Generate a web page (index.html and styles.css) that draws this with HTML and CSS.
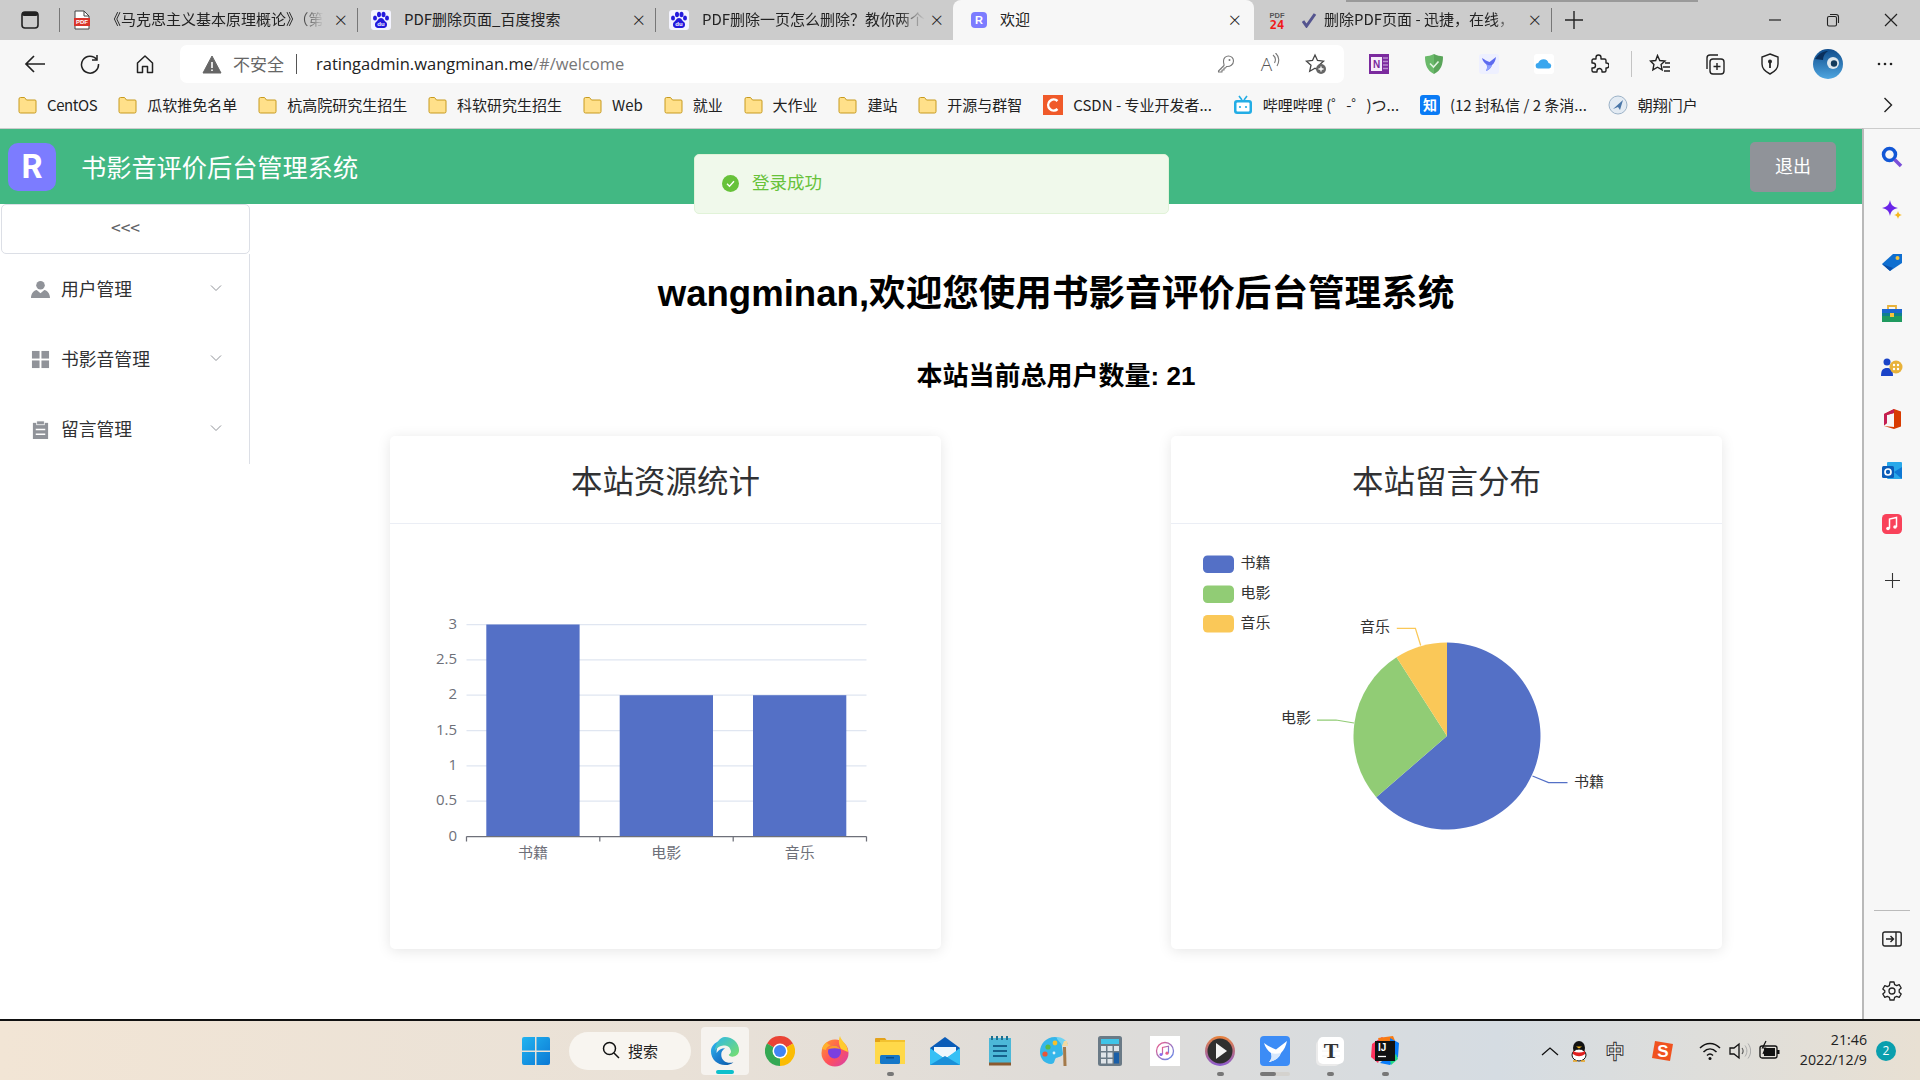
FILE: index.html
```html
<!DOCTYPE html>
<html lang="zh-CN">
<head>
    <meta charset="UTF-8">
    <title>欢迎</title>
    <link rel="stylesheet" href="styles.css">
</head>
<body>

<div class="browser">

    <!-- tab strip -->
    <div class="tabstrip">
        <div class="tab-menu">
            <svg width="20" height="18" viewBox="0 0 20 18"><rect x="2" y="1" width="16" height="16" rx="3" fill="none" stroke="#222" stroke-width="1.6"/><rect x="2" y="1" width="16" height="4" rx="2" fill="#222"/></svg>
        </div>
        <div class="tab">
            <svg class="tab-icon" width="18" height="20" viewBox="0 0 18 20"><path d="M2 1h9l5 5v13H2z" fill="#fff" stroke="#444"/><path d="M11 1v5h5" fill="none" stroke="#444"/><rect x="1" y="8" width="16" height="8" fill="#d9342b"/><text class="pdf-mark" x="9" y="14.2" text-anchor="middle">PDF</text></svg>
            <span class="tab-title tab-title-a">《马克思主义基本原理概论》（第</span>
            <span class="tab-close">×</span>
        </div>
        <div class="tab">
            <svg class="tab-icon" width="20" height="20" viewBox="0 0 20 20"><rect width="20" height="20" rx="3" fill="#f4f4ff"/><ellipse cx="4" cy="8" rx="2" ry="2.6" fill="#2319dc"/><ellipse cx="8" cy="4.5" rx="2" ry="2.8" fill="#2319dc"/><ellipse cx="12.5" cy="4.5" rx="2" ry="2.8" fill="#2319dc"/><ellipse cx="16" cy="8" rx="2" ry="2.6" fill="#2319dc"/><path d="M10 8c-3 0-3 3-5 4-2 2-1 6 2 6h6c3 0 4-4 2-6-2-1-2-4-5-4z" fill="#2319dc"/><text class="du-mark" x="10" y="16.4" text-anchor="middle">du</text></svg>
            <span class="tab-title">PDF删除页面_百度搜索</span>
            <span class="tab-close">×</span>
        </div>
        <div class="tab">
            <svg class="tab-icon" width="20" height="20" viewBox="0 0 20 20"><rect width="20" height="20" rx="3" fill="#f4f4ff"/><ellipse cx="4" cy="8" rx="2" ry="2.6" fill="#2319dc"/><ellipse cx="8" cy="4.5" rx="2" ry="2.8" fill="#2319dc"/><ellipse cx="12.5" cy="4.5" rx="2" ry="2.8" fill="#2319dc"/><ellipse cx="16" cy="8" rx="2" ry="2.6" fill="#2319dc"/><path d="M10 8c-3 0-3 3-5 4-2 2-1 6 2 6h6c3 0 4-4 2-6-2-1-2-4-5-4z" fill="#2319dc"/><text class="du-mark" x="10" y="16.4" text-anchor="middle">du</text></svg>
            <span class="tab-title tab-title-c">PDF删除一页怎么删除？教你两个</span>
            <span class="tab-close">×</span>
        </div>
        <div class="tab tab-active">
            <svg class="tab-icon" width="16" height="16" viewBox="0 0 16 16"><rect width="16" height="16" rx="4" fill="#7c7cff"/><text class="fav-r" x="8" y="12" text-anchor="middle">R</text></svg>
            <span class="tab-title">欢迎</span>
            <span class="tab-close">×</span>
        </div>
        <div class="tab tab-last">
            <svg class="tab-icon" width="18" height="20" viewBox="0 0 18 20"><text class="pdf24-a" x="9" y="7.5" text-anchor="middle">PDF</text><text class="pdf24-b" x="9" y="19" text-anchor="middle">24</text></svg>
            <svg class="tab-icon-b" width="15" height="16" viewBox="0 0 15 16"><path d="M1 9l3.500 5L13 2" fill="none" stroke="#54548f" stroke-width="3"/></svg>
            <span class="tab-title tab-title-e">删除PDF页面 - 迅捷，在线，</span>
            <span class="tab-close">×</span>
        </div>
        <div class="tab-new">
            <svg width="18" height="18" viewBox="0 0 18 18"><path d="M9 0v18M0 9h18" stroke="#222" stroke-width="1.4"/></svg>
        </div>
        <div class="win-controls">
            <svg width="14" height="14" viewBox="0 0 14 14"><path d="M1 7h12" stroke="#222" stroke-width="1.2"/></svg>
            <svg width="14" height="14" viewBox="0 0 14 14"><rect x="1.500" y="3.500" width="9" height="9.500" rx="1.500" fill="none" stroke="#222" stroke-width="1.100"/><path d="M4 1.500h6a2.500 2.500 0 0 1 2.500 2.500v6" fill="none" stroke="#222" stroke-width="1.100"/></svg>
            <svg width="14" height="14" viewBox="0 0 14 14"><path d="M1 1l12 12M13 1L1 13" stroke="#222" stroke-width="1.200"/></svg>
        </div>
        <div class="strip-shadow"></div>
    </div>

    <!-- address bar -->
    <div class="toolbar">
        <div class="tool-slot">
            <svg width="22" height="20" viewBox="0 0 22 20"><path d="M21 10H2M10 2l-8 8 8 8" fill="none" stroke="#222" stroke-width="1.700"/></svg>
        </div>
        <div class="tool-slot">
            <svg width="20" height="20" viewBox="0 0 20 20"><path d="M16.800 5.500A8.500 8.500 0 1 0 18.500 10" fill="none" stroke="#222" stroke-width="1.500"/><path d="M17 1v5h-5" fill="none" stroke="#222" stroke-width="1.500"/></svg>
        </div>
        <div class="tool-slot">
            <svg width="20" height="20" viewBox="0 0 20 20"><path d="M2.500 9L10 2l7.500 7v9.500h-5v-6h-5v6h-5z" fill="none" stroke="#222" stroke-width="1.500" stroke-linejoin="round"/></svg>
        </div>
        <div class="address">
            <svg class="warn" width="20" height="19" viewBox="0 0 20 19"><path d="M10 1l9 17H1z" fill="#666" stroke="#666" stroke-linejoin="round"/><path d="M10 7v6M10 14.500v1.500" stroke="#fff" stroke-width="1.600"/></svg>
            <span class="not-secure">不安全</span>
            <span class="addr-sep"></span>
            <span class="url">ratingadmin.wangminan.me<span class="url-path">/#/welcome</span></span>
            <div class="addr-actions">
                <div class="addr-slot"><svg width="18" height="18" viewBox="0 0 18 18"><path d="M7 10.500L1.500 16v1h3.500v-2h2v-2h1.500l1-1.500c3.500.5 7-2 7-5.500a5 5 0 0 0-10 0c0 1.500.2 2.500.5 3.500z" fill="none" stroke="#777" stroke-width="1.100" stroke-linejoin="round"/><circle cx="12.500" cy="5" r="1" fill="#777"/></svg></div>
                <div class="addr-slot"><span class="read-a">A</span><svg class="read-waves" width="8" height="14" viewBox="0 0 8 14"><path d="M1 2c2.500 2 3 5 1.500 8M3.500 0c4 3.500 4 9 1.500 13" fill="none" stroke="#777" stroke-width="1.100"/></svg></div>
                <div class="addr-slot"><svg width="22" height="22" viewBox="0 0 22 22"><path d="M10 2l2.500 5.500 6 .7-4.500 4 1.300 6-5.300-3-5.300 3 1.300-6-4.500-4 6-.7z" fill="none" stroke="#444" stroke-width="1.300"/><circle cx="16" cy="16" r="5" fill="#666"/><path d="M16 13.500v5M13.500 16h5" stroke="#fff" stroke-width="1.300"/></svg></div>
            </div>
        </div>
        <div class="ext-group">
            <div class="tool-slot"><svg width="20" height="20" viewBox="0 0 20 20"><rect width="20" height="20" fill="#7b2a9e"/><rect x="2" y="3" width="11" height="14" fill="#f6edfa"/><path d="M14 4h5M14 7.500h5M14 11h5M14 14.500h5" stroke="#b98cd0" stroke-width="1.500"/><text class="n-mark" x="7.500" y="14" text-anchor="middle">N</text></svg></div>
            <div class="tool-slot"><svg width="20" height="20" viewBox="0 0 20 20"><path d="M10 0c3 1.500 6 2 9 2.500 0 8-2 14-9 17.500z" fill="#5aa55a"/><path d="M10 0C7 1.500 4 2 1 2.500 1 10.500 3 16.500 10 20z" fill="#6ab96a"/><path d="M6 9.500l3.500 3.500 5-5.500" fill="none" stroke="#dff3df" stroke-width="1.600"/></svg></div>
            <div class="tool-slot"><svg width="20" height="20" viewBox="0 0 20 20"><rect width="20" height="20" rx="3" fill="#eef0ff"/><path d="M3 4c3 2 5 3 7.500 4L17 3c-.5 3.500-1.500 6-4 8-1 3-3 5-6 6 1-2 1.500-4 .5-6.500C5.500 9 3.500 7 3 4z" fill="#5d6bf0"/><path d="M8 10.500c2 1 3 1 5 .5-1 3-3 5-6 6 1-2 1.500-4 1-6.500z" fill="#8ea0ff"/></svg></div>
            <div class="tool-slot"><svg width="20" height="20" viewBox="0 0 20 20"><rect width="20" height="20" rx="3" fill="#fff"/><path d="M4.500 14.500a2.700 2.700 0 0 1-.3-5.400C5 6.800 7 5.300 9.700 5.300c2.500 0 4.300 1.500 4.800 3.700a2.800 2.800 0 0 1 .7 5.500z" fill="#3aa6ee"/></svg></div>
            <div class="tool-slot"><svg width="20" height="20" viewBox="0 0 20 20"><path d="M7 3.500a2.500 2.500 0 0 1 5 0V5h3.500A1.500 1.500 0 0 1 17 6.500V9h.5a2.500 2.500 0 0 1 0 5H17v2.500a1.500 1.500 0 0 1-1.500 1.500H13v-1a2.500 2.500 0 0 0-5 0v1H4.500A1.500 1.500 0 0 1 3 16.500V14h1a2.500 2.500 0 0 0 0-5H3V6.500A1.500 1.500 0 0 1 4.500 5H7z" fill="none" stroke="#222" stroke-width="1.400" stroke-linejoin="round"/></svg></div>
            <span class="tool-sep"></span>
            <div class="tool-slot"><svg width="22" height="20" viewBox="0 0 22 20"><path d="M8.500 1.500l2.300 5 5.200.6-3.900 3.500 1 5.200-4.600-2.600-4.600 2.600 1-5.200L1.500 7.100l5.200-.6z" fill="none" stroke="#222" stroke-width="1.400"/><path d="M14 13h7M16 9h5M15 17h6" stroke="#222" stroke-width="1.400"/></svg></div>
            <div class="tool-slot"><svg width="22" height="22" viewBox="0 0 22 22"><rect x="6" y="6" width="14" height="15" rx="3" fill="none" stroke="#222" stroke-width="1.400"/><path d="M3 16V5a3 3 0 0 1 3-3h8" fill="none" stroke="#222" stroke-width="1.400"/><path d="M13 10v7M9.500 13.500h7" stroke="#222" stroke-width="1.400"/></svg></div>
            <div class="tool-slot"><svg width="20" height="22" viewBox="0 0 20 22"><path d="M10 1l8 3v7c0 5-4 8-8 10-4-2-8-5-8-10V4z" fill="none" stroke="#222" stroke-width="1.400"/><circle cx="10" cy="8.500" r="2" fill="#222"/><path d="M10 10v5" stroke="#222" stroke-width="1.800"/></svg></div>
            <div class="tool-slot tool-avatar"><svg width="30" height="30" viewBox="0 0 30 30"><defs><linearGradient id="av" x1="0" y1="0" x2="0" y2="1"><stop offset="0" stop-color="#0f4c8c"/><stop offset="1" stop-color="#4fa6e0"/></linearGradient></defs><circle cx="15" cy="15" r="15" fill="url(#av)"/><circle cx="20" cy="14" r="6" fill="#dfe8ee"/><circle cx="21" cy="14.500" r="3.200" fill="#113a5c"/><path d="M2 10c4-6 9-8 13-8-3 2-5 5-5 9z" fill="#0a2f5c"/></svg></div>
            <div class="tool-slot tool-more"><svg width="16" height="4" viewBox="0 0 16 4"><circle cx="2" cy="2" r="1.300" fill="#222"/><circle cx="8" cy="2" r="1.300" fill="#222"/><circle cx="14" cy="2" r="1.300" fill="#222"/></svg></div>
        </div>
    </div>

    <!-- bookmarks -->
    <div class="bookmarks">
        <a class="bm bm-tight"><svg class="folder" viewBox="0 0 19 18"><path d="M1 3a1.500 1.500 0 0 1 1.500-1.500h4L8.500 4H17a1 1 0 0 1 1 1v10.500a1.500 1.500 0 0 1-1.500 1.500h-14A1.500 1.500 0 0 1 1 15.500z" fill="#ffe08a" stroke="#c79a1e"/></svg>CentOS</a>
        <a class="bm"><svg class="folder" viewBox="0 0 19 18"><path d="M1 3a1.500 1.500 0 0 1 1.500-1.500h4L8.500 4H17a1 1 0 0 1 1 1v10.500a1.500 1.500 0 0 1-1.500 1.500h-14A1.500 1.500 0 0 1 1 15.500z" fill="#ffe08a" stroke="#c79a1e"/></svg>瓜软推免名单</a>
        <a class="bm"><svg class="folder" viewBox="0 0 19 18"><path d="M1 3a1.500 1.500 0 0 1 1.500-1.500h4L8.500 4H17a1 1 0 0 1 1 1v10.500a1.500 1.500 0 0 1-1.500 1.500h-14A1.500 1.500 0 0 1 1 15.500z" fill="#ffe08a" stroke="#c79a1e"/></svg>杭高院研究生招生</a>
        <a class="bm"><svg class="folder" viewBox="0 0 19 18"><path d="M1 3a1.500 1.500 0 0 1 1.500-1.500h4L8.500 4H17a1 1 0 0 1 1 1v10.500a1.500 1.500 0 0 1-1.500 1.500h-14A1.500 1.500 0 0 1 1 15.500z" fill="#ffe08a" stroke="#c79a1e"/></svg>科软研究生招生</a>
        <a class="bm"><svg class="folder" viewBox="0 0 19 18"><path d="M1 3a1.500 1.500 0 0 1 1.500-1.500h4L8.500 4H17a1 1 0 0 1 1 1v10.500a1.500 1.500 0 0 1-1.500 1.500h-14A1.500 1.500 0 0 1 1 15.500z" fill="#ffe08a" stroke="#c79a1e"/></svg>Web</a>
        <a class="bm"><svg class="folder" viewBox="0 0 19 18"><path d="M1 3a1.500 1.500 0 0 1 1.500-1.500h4L8.500 4H17a1 1 0 0 1 1 1v10.500a1.500 1.500 0 0 1-1.500 1.500h-14A1.500 1.500 0 0 1 1 15.500z" fill="#ffe08a" stroke="#c79a1e"/></svg>就业</a>
        <a class="bm"><svg class="folder" viewBox="0 0 19 18"><path d="M1 3a1.500 1.500 0 0 1 1.500-1.500h4L8.500 4H17a1 1 0 0 1 1 1v10.500a1.500 1.500 0 0 1-1.500 1.500h-14A1.500 1.500 0 0 1 1 15.500z" fill="#ffe08a" stroke="#c79a1e"/></svg>大作业</a>
        <a class="bm"><svg class="folder" viewBox="0 0 19 18"><path d="M1 3a1.500 1.500 0 0 1 1.500-1.500h4L8.500 4H17a1 1 0 0 1 1 1v10.500a1.500 1.500 0 0 1-1.500 1.500h-14A1.500 1.500 0 0 1 1 15.500z" fill="#ffe08a" stroke="#c79a1e"/></svg>建站</a>
        <a class="bm"><svg class="folder" viewBox="0 0 19 18"><path d="M1 3a1.500 1.500 0 0 1 1.500-1.500h4L8.500 4H17a1 1 0 0 1 1 1v10.500a1.500 1.500 0 0 1-1.500 1.500h-14A1.500 1.500 0 0 1 1 15.500z" fill="#ffe08a" stroke="#c79a1e"/></svg>开源与群智</a>
        <a class="bm"><svg class="bm-icon" viewBox="0 0 20 20"><rect width="20" height="20" fill="#f05a2a"/><path d="M14.500 6a5.500 5.500 0 1 0 0 8" fill="none" stroke="#fff" stroke-width="2.500"/></svg>CSDN - 专业开发者...</a>
        <a class="bm"><svg class="bm-icon" viewBox="0 0 20 20"><path d="M6 1l3 4M14 1l-3 4" stroke="#23ade5" stroke-width="1.600"/><rect x="1" y="5" width="18" height="14" rx="3" fill="#23ade5"/><rect x="3.500" y="7.500" width="13" height="9" rx="1" fill="#fff"/><circle cx="7" cy="12" r="1.100" fill="#23ade5"/><circle cx="13" cy="12" r="1.100" fill="#23ade5"/></svg>哔哩哔哩 (゜-゜)つ...</a>
        <a class="bm"><svg class="bm-icon" viewBox="0 0 20 20"><rect width="20" height="20" rx="3" fill="#0a7bf5"/><text class="zhi-mark" x="10" y="15" text-anchor="middle">知</text></svg>(12 封私信 / 2 条消...</a>
        <a class="bm"><svg class="bm-icon" viewBox="0 0 20 20"><circle cx="10" cy="10" r="9" fill="#e3ebf3" stroke="#9db3c8"/><path d="M5 14L15 5l-3 10-2-3z" fill="#4b77a8"/></svg>朝翔门户</a>
        <svg class="bm-more" width="10" height="16" viewBox="0 0 10 16"><path d="M1.500 1l7 7-7 7" fill="none" stroke="#222" stroke-width="1.400"/></svg>
    </div>

    <div class="viewport">
        <div class="page">
            <header class="app-header">
                <div class="logo">R</div>
                <div class="app-title">书影音评价后台管理系统</div>
                <button class="logout">退出</button>
            </header>

            <div class="app-body">
                <aside class="sidebar">
                    <div class="collapse-btn">&lt;&lt;&lt;</div>
                    <ul class="menu">
                        <li class="menu-item">
                            <svg class="menu-icon" viewBox="0 0 20 20"><circle cx="10" cy="5.500" r="4.500" fill="#909399"/><path d="M0 19c0-5 3-8 6-8.500L10 14l4-3.500c3 .5 6 3.500 6 8.500z" fill="#909399"/></svg>
                            <span>用户管理</span>
                            <svg class="menu-arrow" viewBox="0 0 12 8"><path d="M1 1.500l5 5 5-5" fill="none" stroke="#909399" stroke-width="1"/></svg>
                        </li>
                        <li class="menu-item">
                            <svg class="menu-icon" viewBox="0 0 20 20"><rect x="1" y="1" width="8" height="8" fill="#909399"/><rect x="11" y="1" width="8" height="8" fill="#909399"/><rect x="1" y="11" width="8" height="8" fill="#909399"/><rect x="11" y="11" width="8" height="8" fill="#909399"/></svg>
                            <span>书影音管理</span>
                            <svg class="menu-arrow" viewBox="0 0 12 8"><path d="M1 1.500l5 5 5-5" fill="none" stroke="#909399" stroke-width="1"/></svg>
                        </li>
                        <li class="menu-item">
                            <svg class="menu-icon" viewBox="0 0 20 20"><path d="M2 3h16v17H2z" fill="#909399"/><rect x="6" y="1" width="8" height="4" fill="#909399" stroke="#fff" stroke-width=".8"/><path d="M5 10h10M5 15h10" stroke="#fff" stroke-width="1.600"/></svg>
                            <span>留言管理</span>
                            <svg class="menu-arrow" viewBox="0 0 12 8"><path d="M1 1.500l5 5 5-5" fill="none" stroke="#909399" stroke-width="1"/></svg>
                        </li>
                    </ul>
                </aside>

                <main class="main">
                    <h1 class="welcome">wangminan,欢迎您使用书影音评价后台管理系统</h1>
                    <h2 class="user-count">本站当前总用户数量: 21</h2>

                    <div class="cards">
                        <section class="card">
                            <div class="card-header">本站资源统计</div>
                            <svg class="chart" viewBox="390 524 551 425">
                                <g class="grid">
                                    <path d="M466.500 624.500H866.500M466.500 659.800H866.500M466.500 695.200H866.500M466.500 730.500H866.500M466.500 765.800H866.500M466.500 801.200H866.500"/>
                                </g>
                                <rect class="bar" x="486.300" y="624.500" width="93.300" height="212"/>
                                <rect class="bar" x="619.700" y="695.200" width="93.300" height="141.300"/>
                                <rect class="bar" x="753" y="695.200" width="93.300" height="141.300"/>
                                <path class="axis" d="M466.500 836.500H866.500M466.500 836.500v5M599.800 836.500v5M733.200 836.500v5M866.500 836.500v5"/>
                                <g class="tick-y">
                                    <text x="457" y="628.500">3</text>
                                    <text x="457" y="663.500">2.5</text>
                                    <text x="457" y="698.500">2</text>
                                    <text x="457" y="734.500">1.5</text>
                                    <text x="457" y="769.500">1</text>
                                    <text x="457" y="804.500">0.5</text>
                                    <text x="457" y="840.500">0</text>
                                </g>
                                <g class="tick-x">
                                    <text x="533" y="858">书籍</text>
                                    <text x="666.300" y="858">电影</text>
                                    <text x="799.700" y="858">音乐</text>
                                </g>
                            </svg>
                        </section>

                        <section class="card">
                            <div class="card-header">本站留言分布</div>
                            <svg class="chart" viewBox="1171 524 551 425">
                                <rect class="slice-a" x="1203" y="555.500" width="31" height="17.500" rx="4.500"/>
                                <rect class="slice-b" x="1203" y="585.500" width="31" height="17.500" rx="4.500"/>
                                <rect class="slice-c" x="1203" y="615" width="31" height="17.500" rx="4.500"/>
                                <g class="legend">
                                    <text x="1240.500" y="568">书籍</text>
                                    <text x="1240.500" y="598">电影</text>
                                    <text x="1240.500" y="628">音乐</text>
                                </g>
                                <path class="slice-a" d="M1447 736V642.500A93.500 93.500 0 1 1 1376.300 797.200Z"/>
                                <path class="slice-b" d="M1447 736L1376.300 797.200A93.500 93.500 0 0 1 1396.500 657.300Z"/>
                                <path class="slice-c" d="M1447 736L1396.500 657.300A93.500 93.500 0 0 1 1447 642.500Z"/>
                                <path class="leader-a" d="M1532.500 776L1548.600 782.500H1567.500"/>
                                <path class="leader-b" d="M1354 723L1336 720H1317"/>
                                <path class="leader-c" d="M1420.700 645.500L1415.400 628.300H1396.800"/>
                                <text class="pie-label" x="1574" y="786.500">书籍</text>
                                <text class="pie-label end" x="1311" y="723">电影</text>
                                <text class="pie-label end" x="1390" y="631.500">音乐</text>
                            </svg>
                        </section>
                    </div>
                </main>
            </div>

            <div class="toast">
                <svg width="17" height="17" viewBox="0 0 17 17"><circle cx="8.500" cy="8.500" r="8.500" fill="#67c23a"/><path d="M5 8.800l2.500 2.500L12 6.300" fill="none" stroke="#fff" stroke-width="1.400"/></svg>
                <span class="toast-text">登录成功</span>
            </div>
        </div>

        <!-- edge sidebar -->
        <div class="edge-bar">
            <svg class="edge-icon" viewBox="0 0 22 22"><circle cx="8.500" cy="8.500" r="6" fill="none" stroke="#1257d6" stroke-width="3.500"/><path d="M13.500 13.500L20 20" stroke="#7a4fd8" stroke-width="3.500"/></svg>
            <svg class="edge-icon" viewBox="0 -2 22 22"><path d="M9 0c1 5 3 7 8 8-5 1-7 3-8 8-1-5-3-7-8-8 5-1 7-3 8-8z" fill="#6a25e8"/><path d="M17 11c.5 2.500 1.500 3.500 4 4-2.500.5-3.500 1.500-4 4-.5-2.500-1.500-3.500-4-4 2.500-.5 3.500-1.500 4-4z" fill="#f6b81f"/></svg>
            <svg class="edge-icon" viewBox="0 0 22 22"><path d="M1 13L12 3h9v9L9 20z" fill="#0f6fd0"/><path d="M1 13l8 7 3-3z" fill="#0a4fa8"/><circle cx="16.500" cy="7" r="2" fill="#f4c33c"/></svg>
            <svg class="edge-icon" viewBox="0 0 22 22"><rect x="1" y="6" width="20" height="13" rx="1" fill="#0f7f8f"/><rect x="1" y="13" width="20" height="6" fill="#1f9a5f"/><rect x="1" y="6" width="20" height="4" fill="#1c66d0"/><path d="M7 6V3h8v3" fill="none" stroke="#e8b23a" stroke-width="1.800"/><rect x="9" y="10" width="4" height="4" fill="#f4c33c"/></svg>
            <svg class="edge-icon" viewBox="0 0 22 22"><circle cx="6" cy="6" r="3.500" fill="#1a44c8"/><path d="M0 20c0-6 2-8 6-8s6 2 6 8z" fill="#1a44c8"/><circle cx="15" cy="11" r="6.500" fill="#e8b23a"/><circle cx="13" cy="9" r="1.200" fill="#fff"/><circle cx="17" cy="9" r="1.200" fill="#fff"/><circle cx="13" cy="13" r="1.200" fill="#fff"/><circle cx="17" cy="13" r="1.200" fill="#fff"/></svg>
            <svg class="edge-icon" viewBox="0 0 22 22"><path d="M13 1l7 2.500v15L13 21l-10-3 10 1V5L6 7v8l-3 2.500V6z" fill="#d83b01"/><path d="M3 6l10-5v4L6 7v8l-3 2.500z" fill="#c41e52"/></svg>
            <svg class="edge-icon" viewBox="0 0 22 22"><rect x="6" y="2" width="15" height="17" rx="1" fill="#28a8ea"/><rect x="1" y="6" width="12" height="12" rx="1.500" fill="#0a5cb8"/><circle cx="7" cy="12" r="3" fill="none" stroke="#fff" stroke-width="1.700"/><path d="M13 12l8-5v12z" fill="#0f78d4"/></svg>
            <svg class="edge-icon" viewBox="0 0 22 22"><rect x="1" y="1" width="20" height="20" rx="4.500" fill="#f9425a"/><path d="M8.500 15.500V6l7-1.500V14" fill="none" stroke="#fff" stroke-width="1.500"/><circle cx="7" cy="15.500" r="1.800" fill="#fff"/><circle cx="14" cy="14" r="1.800" fill="#fff"/></svg>
            <svg class="edge-add" width="15" height="15" viewBox="0 0 15 15"><path d="M7.500 0v15M0 7.500h15" stroke="#333" stroke-width="1.100"/></svg>
            <span class="edge-sep"></span>
            <svg class="edge-pane" width="20" height="16" viewBox="0 0 20 16"><rect x=".8" y="1" width="18.400" height="14" rx="2" fill="none" stroke="#222" stroke-width="1.400"/><path d="M14 1v14" stroke="#222" stroke-width="1.400"/><path d="M4 8h7M8.500 5l3 3-3 3" fill="none" stroke="#222" stroke-width="1.400"/></svg>
            <svg class="edge-gear" width="20" height="20" viewBox="0 0 20 20"><path d="M8 1h4l.6 2.700 2.100 1 2.500-1.100 2 3.400-2 1.800v2.400l2 1.800-2 3.400-2.500-1.100-2.100 1L12 19H8l-.6-2.700-2.100-1-2.500 1.100-2-3.400 2-1.800V9.800l-2-1.800 2-3.400 2.500 1.100 2.100-1z" fill="none" stroke="#222" stroke-width="1.300" stroke-linejoin="round"/><circle cx="10" cy="10" r="3" fill="none" stroke="#222" stroke-width="1.300"/></svg>
        </div>
    </div>

    <!-- windows taskbar -->
    <footer class="taskbar">
        <div class="task-slot">
            <svg width="30" height="30" viewBox="0 0 30 30"><defs><linearGradient id="win" x1="0" y1="0" x2="1" y2="1"><stop offset="0" stop-color="#22b4f0"/><stop offset="1" stop-color="#0b78d4"/></linearGradient></defs><path d="M1 3a2 2 0 0 1 2-2h11v13.500H1zM15.500 1H27a2 2 0 0 1 2 2v11.500H15.500zM1 16h13v13H3a2 2 0 0 1-2-2zM15.500 16H29v11a2 2 0 0 1-2 2H15.500z" fill="url(#win)"/></svg>
        </div>
        <div class="search-box">
            <svg width="18" height="18" viewBox="0 0 18 18"><circle cx="7.500" cy="7.500" r="6" fill="none" stroke="#111" stroke-width="1.500"/><path d="M12 12l5 5" stroke="#111" stroke-width="1.500"/></svg>
            <span>搜索</span>
        </div>
        <div class="task-slot task-edge is-active">
            <svg width="30" height="30" viewBox="0 0 32 32"><defs><linearGradient id="edge1" x1="0" y1="0" x2="1" y2="1"><stop offset="0" stop-color="#35c1f1"/><stop offset=".5" stop-color="#1b7fd0"/><stop offset="1" stop-color="#0c59a4"/></linearGradient><linearGradient id="edge2" x1="0" y1="0" x2="1" y2="1"><stop offset="0" stop-color="#2fb8e8"/><stop offset="1" stop-color="#79e06a"/></linearGradient></defs><path d="M15 4C7 5 1 10 1 16c0 9 7 15 15 15 4 0 7-1 9-3-6 2-13-1-13-8 0-3 1-5 4-7-4 0-7 2-9 5 0-7 4-12 8-14z" fill="url(#edge1)"/><path d="M16 1c8 0 15 6 15 14 0 5-4 7-7 7-2 0-4-1-4-2 2-1 3-3 2-5-1-4-4-5-7-5-2 0-7 1-10 6C6 8 10 1 16 1z" fill="url(#edge2)"/></svg>
        </div>
        <div class="task-slot">
            <svg width="30" height="30" viewBox="1 1 30 30"><path d="M16 16L3 8.500A15 15 0 0 1 29 8.500Z" fill="#ea4335"/><path d="M16 16L29 8.500A15 15 0 0 1 16 31Z" fill="#fbbc04"/><path d="M16 16L16 31A15 15 0 0 1 3 8.500Z" fill="#34a853"/><circle cx="16" cy="16" r="7.500" fill="#fff"/><circle cx="16" cy="16" r="6" fill="#4285f4"/></svg>
        </div>
        <div class="task-slot">
            <svg width="30" height="32" viewBox="0 0 30 32"><defs><linearGradient id="fox" x1="0" y1="0" x2="1" y2="1"><stop offset="0" stop-color="#ff9b2b"/><stop offset=".55" stop-color="#ff4f5e"/><stop offset="1" stop-color="#d13fb0"/></linearGradient></defs><circle cx="15" cy="18" r="13.500" fill="url(#fox)"/><path d="M20 1c1 5 8 8 8 16l-7-3c-2-4-3-8-1-13z" fill="#ffcb2f"/><path d="M2 14c1-4 3-6 5-7 0 2 2 3 4 3-3 1-5 3-5 5z" fill="#ffb02e"/><circle cx="14.500" cy="17" r="6.500" fill="#7a3fe0"/><path d="M8 14c4-5 10-4 12 0-3-1-7-1-12 0z" fill="#ff9b2b"/></svg>
        </div>
        <div class="task-slot has-dot">
            <svg width="30" height="28" viewBox="0 0 30 28"><path d="M0 2a1 1 0 0 1 1-1h9l3 4H0z" fill="#e3a21a"/><path d="M0 5h30v22H0z" fill="#ffd94a"/><path d="M5 3h25v2H5z" fill="#f2c230"/><rect x="5" y="18" width="20" height="9" rx="1.500" fill="#1577c8"/><rect x="11" y="20" width="8" height="1.500" fill="#0c4f8c"/></svg>
        </div>
        <div class="task-slot">
            <svg width="30" height="30" viewBox="0 0 30 30"><path d="M0 12L15 1l15 11v17H0z" fill="#0a5cb8"/><path d="M4 11h22v5L15 23 4 16z" fill="#eef6fc"/><path d="M0 12l15 11 15-11v17H0z" fill="#35c0f5"/><path d="M0 29l15-9 15 9z" fill="#1a8fd8"/></svg>
        </div>
        <div class="task-slot">
            <svg width="22" height="30" viewBox="0 0 22 30"><rect y="2" width="22" height="25" fill="#4cb8d8"/><path d="M3 0v4M8 0v4M13 0v4M18 0v4" stroke="#1e6f8f" stroke-width="2"/><path d="M4 10h14M4 15h14M4 20h14" stroke="#16618c" stroke-width="2"/><rect y="26.500" width="22" height="3" fill="#8a5a30"/></svg>
        </div>
        <div class="task-slot">
            <svg width="30" height="30" viewBox="0 0 30 30"><path d="M15 1C6 1 0 8 0 16c0 7 5 12 11 12 4 0 3-4 5-6 2-1 6-1 7-4L21 3c-2-1-4-2-6-2z" fill="#35b6ea"/><path d="M17 1c5 0 9 3 11 7l-5 2-6-7z" fill="#6fd3f2"/><circle cx="8" cy="11" r="2.600" fill="#58b947"/><circle cx="15" cy="7" r="2.400" fill="#f6c02c"/><circle cx="5" cy="18" r="2.600" fill="#e8563a"/><circle cx="14" cy="17" r="1.400" fill="#dff3fb"/><path d="M23 11h3l.5 19h-3z" fill="#a47a4a"/><path d="M22 10l2-5 3 0 1 5z" fill="#f2d9a0"/></svg>
        </div>
        <div class="task-slot">
            <svg width="24" height="30" viewBox="0 0 24 30"><rect width="24" height="30" rx="2.500" fill="#6a7a86"/><rect x="3" y="3" width="18" height="5" fill="#3fc4e8"/><rect x="3" y="10" width="5" height="5" fill="#dfe4e8"/><rect x="9.500" y="10" width="5" height="5" fill="#dfe4e8"/><rect x="16" y="10" width="5" height="5" fill="#dfe4e8"/><rect x="3" y="16.500" width="5" height="5" fill="#dfe4e8"/><rect x="9.500" y="16.500" width="5" height="5" fill="#dfe4e8"/><rect x="16" y="16.500" width="5" height="11" fill="#1a5fa8"/><rect x="3" y="23" width="5" height="4.500" fill="#dfe4e8"/><rect x="9.500" y="23" width="5" height="4.500" fill="#dfe4e8"/></svg>
        </div>
        <div class="task-slot">
            <svg width="30" height="30" viewBox="0 0 30 30"><defs><linearGradient id="tune" x1="0" y1="0" x2="1" y2="1"><stop offset="0" stop-color="#f05a88"/><stop offset="1" stop-color="#5a8cf0"/></linearGradient></defs><rect width="30" height="30" fill="#fff"/><circle cx="15" cy="15" r="8.500" fill="none" stroke="url(#tune)" stroke-width="1.300"/><path d="M12.500 18.500V11.500l6-1.300v7" fill="none" stroke="url(#tune)" stroke-width="1.200"/><circle cx="11" cy="18.500" r="1.600" fill="#8a6af0"/><circle cx="17" cy="17.200" r="1.600" fill="#e8608c"/></svg>
        </div>
        <div class="task-slot has-dot">
            <svg width="30" height="30" viewBox="0 0 30 30"><defs><linearGradient id="ply" x1="0" y1="0" x2="0" y2="1"><stop offset="0" stop-color="#e8823a"/><stop offset="1" stop-color="#8a5ad0"/></linearGradient></defs><circle cx="15" cy="15" r="15" fill="url(#ply)"/><circle cx="15" cy="15" r="12.500" fill="#2f2f2f"/><path d="M11 7l11 8-11 8z" fill="#f4f4f4"/></svg>
        </div>
        <div class="task-slot has-dot is-wide">
            <svg width="30" height="30" viewBox="0 0 30 30"><rect width="30" height="30" rx="4" fill="#3c8cf6"/><path d="M4 7c4 3 8 5 12 6.500L27 5c-1 5-3 9-6 12-2 5-6 8-12 9 3-3 3-6 2-9C8 15 5 11 4 7z" fill="#fff"/><path d="M11 17c3 1 6 1 10 0-2 5-6 8-12 9 3-3 3-6 2-9z" fill="#d8e8fc"/></svg>
        </div>
        <div class="task-slot has-dot">
            <svg width="28" height="30" viewBox="0 0 28 30"><rect x="0" y="4" width="24" height="26" rx="5" fill="#ebebeb"/><rect x="2" y="1" width="26" height="27" rx="5" fill="#fff"/><path d="M6 10h18M6 15h18M6 20h18" stroke="#f2f2f2"/><text class="typora-t" x="15" y="22" text-anchor="middle">T</text></svg>
        </div>
        <div class="task-slot has-dot">
            <svg width="30" height="30" viewBox="0 0 30 30"><path d="M2 8L12 1l5 4-9 22-7-6z" fill="#fe315d"/><path d="M8 2l15-2 3 7-14 3z" fill="#f97a12"/><path d="M20 2l9 5-1 14-8 8-10-2 10-10z" fill="#087cfa"/><path d="M20 24l6-6 2 5-7 6z" fill="#21d789"/><rect x="5" y="5" width="20" height="20" fill="#111"/><text class="ij-mark" x="8" y="15">IJ</text><path d="M8 20.500h8" stroke="#fff" stroke-width="1.300"/></svg>
        </div>

        <div class="tray">
            <svg class="tray-icon" viewBox="0 0 22 22"><path d="M3 15l8-7 8 7" fill="none" stroke="#111" stroke-width="1.300"/></svg>
            <svg class="tray-icon gap-7" viewBox="0 0 22 22"><ellipse cx="11" cy="8" rx="6" ry="7" fill="#111"/><ellipse cx="11" cy="15" rx="7" ry="6" fill="#fff" stroke="#111"/><path d="M5 11c4 2 8 2 12 0v3c-4 3-8 3-12 0z" fill="#e02020"/><path d="M8 6.500h6l-3 2z" fill="#f5b81f"/><path d="M5 21h4M13 21h4" stroke="#e8a11a" stroke-width="1.500"/></svg>
            <span class="ime gap-14">中</span>
            <svg class="tray-icon gap-26" viewBox="0 0 22 22"><path d="M3 1l18 3-3 17L0 18z" fill="#f0521f"/><text class="sogou-s" x="11" y="16.500" text-anchor="middle">S</text></svg>
            <svg class="tray-icon gap-25" viewBox="0 0 22 22"><path d="M1 8c6-6 14-6 20 0M4.500 12c4-4 9-4 13 0M8 15.500c2-2 4-2 6 0" fill="none" stroke="#111" stroke-width="1.500"/><circle cx="11" cy="18.500" r="1.500" fill="#111"/></svg>
            <svg class="tray-icon gap-8" viewBox="0 0 22 22"><path d="M1 8v6h4l5 4V4L5 8z" fill="none" stroke="#111" stroke-width="1.300"/><path d="M13 8c1.500 2 1.500 4 0 6" fill="none" stroke="#555" stroke-width="1.100"/><path d="M16 5.500c2.500 3.500 2.500 7.500 0 11M19 3.500c3.500 4.500 3.500 10.500 0 15" fill="none" stroke="#aaa" stroke-width="1"/></svg>
            <svg class="tray-icon gap-8" viewBox="0 0 22 22"><rect x="1" y="6" width="17" height="12" rx="2" fill="none" stroke="#111" stroke-width="1.300"/><rect x="5" y="8" width="11" height="8" fill="#111"/><rect x="18" y="10" width="2.500" height="4" fill="#111"/><path d="M7 1L3.500 8h3L4 14" fill="none" stroke="#111" stroke-width="1.200"/></svg>
            <div class="clock gap-16"><span>21:46</span><span>2022/12/9</span></div>
            <span class="notify gap-9">2</span>
        </div>
    </footer>
</div>

</body>
</html>
```
FILE: styles.css
```css
* {
    box-sizing: border-box;
}

body {
    margin: 0;
    width: 1920px;
    height: 1080px;
    overflow: hidden;
    font-family: "Noto Sans CJK SC", sans-serif;
    color: #222;
}

.browser {
    position: relative;
    display: flex;
    flex-direction: column;
    height: 1080px;
}

/* tab strip */
.tabstrip {
    position: relative;
    display: flex;
    height: 40px;
    flex-shrink: 0;
    background-color: #cccccc;
}

.tab-menu {
    display: flex;
    align-items: center;
    justify-content: center;
    width: 60px;
    height: 24px;
    margin-top: 8px;
    border-right: 1px solid #777;
}

.tab {
    display: flex;
    align-items: center;
    flex-shrink: 0;
    width: 298px;
    height: 40px;
    padding-left: 13px;
    font-size: 15px;
    position: relative;
    white-space: nowrap;
}

.tab::after {
    content: "";
    position: absolute;
    right: 0;
    top: 8px;
    width: 1px;
    height: 24px;
    background-color: #777;
}

.tab-icon {
    flex-shrink: 0;
    overflow: visible;
}

.tab-icon-b {
    flex-shrink: 0;
    margin-left: 16px;
}

.tab-title {
    margin-left: 13px;
    padding-bottom: 4px;
}

.tab-title-a {
    margin-left: 15px;
    -webkit-mask-image: linear-gradient(90deg, #000 88%, transparent);
    mask-image: linear-gradient(90deg, #000 88%, transparent);
}

.tab-title-c {
    margin-left: 13px;
    -webkit-mask-image: linear-gradient(90deg, #000 88%, transparent);
    mask-image: linear-gradient(90deg, #000 88%, transparent);
}

.tab-title-e {
    margin-left: 7px;
    -webkit-mask-image: linear-gradient(90deg, #000 90%, transparent);
    mask-image: linear-gradient(90deg, #000 90%, transparent);
}

.tab-close {
    position: absolute;
    right: 11px;
    top: 7px;
    font-family: "Open Sans", sans-serif;
    font-size: 22px;
    line-height: 24px;
    font-weight: 300;
    color: #222;
}

.tab-active {
    width: 301px;
    margin-left: -1px;
    padding-left: 18px;
    background-color: #f7f7f7;
    border-radius: 8px 8px 0 0;
    z-index: 1;
}

.tab-active::after {
    display: none;
}

.tab-active .tab-close {
    right: 13px;
}

.tab-last {
    padding-left: 14px;
}

.tab-new {
    display: flex;
    align-items: center;
    justify-content: center;
    width: 44px;
    height: 40px;
}

.win-controls {
    display: flex;
    align-items: center;
    gap: 44px;
    margin-left: auto;
    padding-right: 22px;
}

.strip-shadow {
    position: absolute;
    left: 1346px;
    top: 0;
    width: 352px;
    height: 2px;
    background-color: #9a9a9a;
}

.pdf-mark,
.du-mark {
    font-family: "Liberation Sans", sans-serif;
    font-size: 6px;
    font-weight: bold;
    fill: #fff;
}

.fav-r {
    font-family: "Liberation Sans", sans-serif;
    font-size: 11px;
    font-weight: bold;
    fill: #fff;
}

.pdf24-a {
    font-family: "Liberation Sans", sans-serif;
    font-size: 7.5px;
    font-weight: bold;
    fill: #555;
}

.pdf24-b {
    font-family: "DejaVu Sans Mono", monospace;
    font-size: 12px;
    font-weight: bold;
    fill: #f01818;
}

/* address bar */
.toolbar {
    display: flex;
    align-items: center;
    height: 44px;
    flex-shrink: 0;
    padding-top: 4px;
    padding-left: 7.5px;
    background-color: #f7f7f7;
}

.tool-slot {
    display: flex;
    align-items: center;
    justify-content: center;
    width: 55px;
    height: 38px;
    flex-shrink: 0;
}

.address {
    display: flex;
    align-items: center;
    width: 1164px;
    height: 38px;
    margin-left: 7.5px;
    padding-left: 22px;
    background-color: #fff;
    border-radius: 7px;
    flex-shrink: 0;
}

.not-secure {
    margin-left: 11px;
    padding-bottom: 2px;
    font-size: 17px;
    color: #666;
}

.addr-sep {
    width: 1px;
    height: 20px;
    margin-left: 12px;
    background-color: #555;
}

.url {
    margin-left: 19px;
    padding-bottom: 2px;
    font-family: "Open Sans", sans-serif;
    font-size: 16.500px;
    color: #222;
}

.url-path {
    color: #777;
}

.addr-actions {
    display: flex;
    margin-left: auto;
    padding-right: 6px;
}

.addr-slot {
    display: flex;
    align-items: center;
    justify-content: center;
    width: 45px;
    height: 38px;
}

.read-a {
    font-family: "Open Sans", sans-serif;
    font-size: 19px;
    font-weight: 300;
    color: #555;
}

.read-waves {
    margin-bottom: 8px;
}

.n-mark {
    font-family: "Liberation Sans", sans-serif;
    font-size: 10px;
    font-weight: bold;
    fill: #7b2a9e;
}

.ext-group {
    display: flex;
    align-items: center;
    margin-left: 7.5px;
}

.tool-sep {
    width: 1px;
    height: 26px;
    margin: 0 1px 0 4px;
    background-color: #c4c4c4;
}

.tool-avatar {
    margin-left: 3px;
}

.tool-more {
    margin-left: 2px;
}

/* bookmarks */
.bookmarks {
    display: flex;
    align-items: center;
    gap: 20.900px;
    height: 44px;
    flex-shrink: 0;
    padding-left: 18px;
    padding-bottom: 3px;
    background-color: #f7f7f7;
    font-size: 15px;
    color: #222;
}

.bm {
    display: flex;
    align-items: center;
    gap: 10px;
    white-space: nowrap;
}

.bm-tight {
    letter-spacing: -0.4px;
}

.folder {
    width: 19px;
    height: 18px;
    flex-shrink: 0;
}

.bm-icon {
    width: 20px;
    height: 20px;
    flex-shrink: 0;
}

.zhi-mark {
    font-family: "Noto Sans CJK SC", sans-serif;
    font-size: 14px;
    font-weight: bold;
    fill: #fff;
}

.bm-more {
    margin-left: auto;
    margin-right: 27px;
}

/* page */
.viewport {
    display: flex;
    flex: 1;
    min-height: 0;
}

.page {
    position: relative;
    width: 1862px;
    border-top: 1px solid #cccccc;
    background-color: #fff;
    font-family: "Noto Sans CJK SC", sans-serif;
}

.app-header {
    display: flex;
    align-items: center;
    height: 75px;
    padding-left: 8px;
    background-color: #42b883;
    color: #fff;
}

.logo {
    display: flex;
    align-items: center;
    justify-content: center;
    width: 48px;
    height: 48px;
    border-radius: 10px;
    background-color: #7c7cff;
    font-family: "Inter", sans-serif;
    font-size: 32px;
    font-weight: bold;
}

.app-title {
    margin-left: 25px;
    padding-bottom: 2px;
    font-size: 25.200px;
}

.logout {
    width: 86px;
    height: 50px;
    margin-left: auto;
    margin-right: 26px;
    padding-bottom: 4px;
    border: none;
    border-radius: 5px;
    background-color: #909399;
    color: #fff;
    font-family: inherit;
    font-size: 18px;
}

.app-body {
    display: flex;
}

.sidebar {
    width: 250px;
    flex-shrink: 0;
}

.collapse-btn {
    width: 249px;
    height: 50px;
    margin-left: 1px;
    border: 1px solid #dcdfe6;
    border-radius: 5px;
    text-align: center;
    line-height: 44px;
    font-size: 17.500px;
    color: #606266;
}

.menu {
    list-style: none;
    margin: 0;
    padding: 0;
    border-right: 1px solid #dcdfe6;
}

.menu-item {
    display: flex;
    align-items: center;
    height: 70px;
    padding: 0 27px 0 31px;
    font-size: 17.800px;
    color: #303133;
}

.menu-item span {
    padding-bottom: 2px;
}

.menu-icon {
    width: 19px;
    height: 19px;
    margin-right: 11px;
}

.menu-arrow {
    width: 12px;
    height: 8px;
    margin-left: auto;
    margin-bottom: 3px;
}

.main {
    flex: 1;
    text-align: center;
}

.welcome {
    margin: 65px 0 0;
    font-family: "Liberation Sans", "Noto Sans CJK SC", sans-serif;
    font-size: 36.600px;
    line-height: 50px;
    color: #000;
}

.user-count {
    margin: 39px 0 0;
    font-family: "Liberation Sans", "Noto Sans CJK SC", sans-serif;
    font-size: 26px;
    line-height: 36px;
    color: #000;
}

.cards {
    display: flex;
    justify-content: space-between;
    margin-top: 42px;
    padding: 0 140px;
}

.card {
    width: 551px;
    height: 513px;
    background-color: #fff;
    border-radius: 5px;
    box-shadow: 0 2px 14px rgba(0, 0, 0, 0.1);
}

.card-header {
    height: 88px;
    border-bottom: 1px solid #ebeef5;
    line-height: 86px;
    font-size: 31.500px;
    color: #303133;
}

.chart {
    display: block;
    width: 551px;
    height: 425px;
}

.grid path {
    fill: none;
    stroke: #e0e6f1;
    stroke-width: 1.250;
}

.bar {
    fill: #5470c6;
}

.axis {
    fill: none;
    stroke: #6e7079;
    stroke-width: 1.250;
}

.tick-y text,
.tick-x text {
    font-family: "Open Sans", "Noto Sans CJK SC", sans-serif;
    font-size: 15px;
    fill: #6e7079;
}

.tick-y text {
    text-anchor: end;
}

.tick-x text {
    text-anchor: middle;
}

.slice-a {
    fill: #5470c6;
}

.slice-b {
    fill: #91cc75;
}

.slice-c {
    fill: #fac858;
}

.legend text,
.pie-label {
    font-size: 15px;
    fill: #333;
}

.pie-label.end {
    text-anchor: end;
}

.leader-a,
.leader-b,
.leader-c {
    fill: none;
    stroke-width: 1.250;
}

.leader-a {
    stroke: #5470c6;
}

.leader-b {
    stroke: #91cc75;
}

.leader-c {
    stroke: #fac858;
}

.toast {
    position: absolute;
    left: 694px;
    top: 25px;
    display: flex;
    align-items: center;
    gap: 13px;
    width: 475px;
    height: 60px;
    padding-left: 27px;
    background-color: #f0f9eb;
    border: 1px solid #e1f3d8;
    border-radius: 5px;
    font-size: 17.500px;
    color: #67c23a;
    z-index: 5;
}

.toast svg {
    margin-bottom: 2px;
}

.toast-text {
    padding-bottom: 5px;
}

/* edge sidebar */
.edge-bar {
    display: flex;
    flex-direction: column;
    align-items: center;
    width: 58px;
    padding-top: 17px;
    border-left: 2px solid #b9b9b9;
    border-top: 1px solid #cccccc;
    background-color: #f7f7f7;
}

.edge-icon {
    width: 22px;
    height: 22px;
    margin-bottom: 30.400px;
    flex-shrink: 0;
}

.edge-add {
    margin-top: 8px;
    flex-shrink: 0;
}

.edge-sep {
    width: 36px;
    height: 1px;
    margin-top: 322px;
    background-color: #bbbbbb;
    flex-shrink: 0;
}

.edge-pane {
    margin-top: 20px;
    flex-shrink: 0;
}

.edge-gear {
    margin-top: 34px;
    flex-shrink: 0;
}

/* taskbar */
.taskbar {
    display: flex;
    align-items: center;
    height: 61px;
    flex-shrink: 0;
    padding-left: 508.500px;
    border-top: 2px solid #111;
    background: linear-gradient(90deg, #f2e5d5 0, #e9e1d7 35%, #dfdcd8 55%, #d5dce2 78%, #e8e0d3 100%);
}

.task-slot {
    position: relative;
    display: flex;
    align-items: center;
    justify-content: center;
    width: 55px;
    height: 48px;
    flex-shrink: 0;
}

.search-box {
    display: flex;
    align-items: center;
    justify-content: center;
    gap: 8px;
    width: 122px;
    height: 38px;
    margin: 0 6.500px 0 5.500px;
    padding-bottom: 1px;
    border-radius: 19px;
    background-color: #f8f5f0;
    font-size: 15px;
    color: #222;
}

.task-edge::before {
    content: "";
    position: absolute;
    left: 3.500px;
    top: 0;
    width: 48px;
    height: 48px;
    border-radius: 4px;
    background-color: rgba(255, 255, 255, 0.6);
}

.task-edge svg {
    position: relative;
}

.is-active::after {
    content: "";
    position: absolute;
    left: 18.500px;
    bottom: 1px;
    width: 18px;
    height: 4px;
    border-radius: 2px;
    background-color: #0cc0cc;
}

.has-dot::after {
    content: "";
    position: absolute;
    left: 24px;
    bottom: -1px;
    width: 7px;
    height: 4px;
    border-radius: 2px;
    background-color: #777;
}

.is-wide::before {
    content: "";
    position: absolute;
    left: 12.500px;
    bottom: -1px;
    width: 30px;
    height: 4px;
    border-radius: 2px;
    background-color: #d4d2ce;
}

.is-wide::after {
    left: 12.500px;
    width: 16px;
}

.typora-t {
    font-family: "Liberation Serif", serif;
    font-size: 22px;
    font-weight: bold;
    fill: #333;
}

.ij-mark {
    font-family: "Liberation Sans", sans-serif;
    font-size: 10px;
    font-weight: bold;
    fill: #fff;
}

.sogou-s {
    font-family: "Liberation Sans", sans-serif;
    font-size: 17px;
    font-weight: bold;
    fill: #fff;
}

.tray {
    display: flex;
    align-items: center;
    margin-left: 126.500px;
}

.tray-icon {
    width: 22px;
    height: 22px;
    flex-shrink: 0;
}

.ime {
    width: 22px;
    text-align: center;
    font-size: 19px;
    font-weight: bold;
    line-height: 22px;
    color: #fff;
    -webkit-text-stroke: 1px #333;
}

.clock {
    display: flex;
    flex-direction: column;
    align-items: flex-end;
    width: 70px;
    margin-top: -2px;
    font-family: "Open Sans", sans-serif;
    font-size: 14.200px;
    line-height: 20px;
    white-space: nowrap;
    color: #222;
}

.notify {
    width: 20px;
    height: 20px;
    border-radius: 50%;
    background-color: #0a9fae;
    color: #fff;
    text-align: center;
    font-family: "Open Sans", sans-serif;
    font-size: 12px;
    line-height: 20px;
}

.gap-7 { margin-left: 7px; }
.gap-8 { margin-left: 8px; }
.gap-9 { margin-left: 9px; }
.gap-14 { margin-left: 14px; }
.gap-16 { margin-left: 16px; }
.gap-25 { margin-left: 25px; }
.gap-26 { margin-left: 26px; }
```
